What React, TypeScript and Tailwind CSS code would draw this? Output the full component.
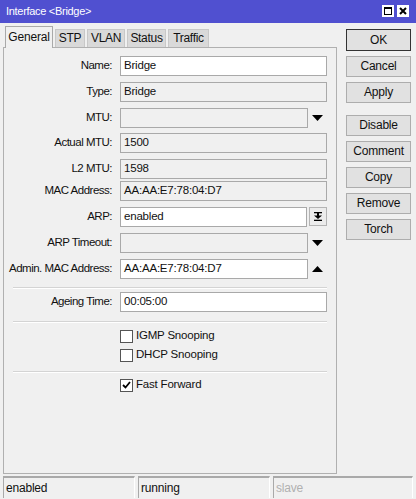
import React from "react";

const DownArrow = () => (
    <svg width="11" height="6" viewBox="0 0 11 6">
        <polygon points="0,0 11,0 5.5,6" fill="#000" />
    </svg>
);

const UpArrow = () => (
    <svg width="11" height="6" viewBox="0 0 11 6">
        <polygon points="0,6 11,6 5.5,0" fill="#000" />
    </svg>
);

const ArpIcon = () => (
    <svg width="8" height="9" viewBox="0 0 8 9">
        <rect x="0" y="0" width="8" height="1.3" fill="#000" />
        <rect x="3" y="1" width="2" height="3" fill="#000" />
        <polygon points="0,3.5 8,3.5 4,7" fill="#000" />
        <rect x="0" y="7.7" width="8" height="1.3" fill="#000" />
    </svg>
);

function Field({
    label,
    value,
    disabled,
    mt,
    side,
}: {
    label: string;
    value?: string;
    disabled?: boolean;
    mt: string;
    side?: "down" | "up" | "arp";
}) {
    const bg = disabled ? "bg-[#f0f0f0]" : "bg-white";
    return (
        <div className={`flex items-center h-[20px] ${mt}`}>
            <div className="w-[108px] text-right text-[#111] text-[11.5px] tracking-[-0.5px]">{label}</div>
            {!side && (
                <div
                    className={`ml-[8px] w-[207px] h-[20px] border border-[#a9a9a9] ${bg} pl-[3px] flex items-center`}
                >
                    {value}
                </div>
            )}
            {(side === "down" || side === "up") && (
                <>
                    <div
                        className={`ml-[8px] w-[188px] h-[20px] border border-[#a9a9a9] ${bg} pl-[3px] flex items-center`}
                    >
                        {value}
                    </div>
                    <div className="w-[19px] flex justify-center">
                        {side === "down" ? <DownArrow /> : <UpArrow />}
                    </div>
                </>
            )}
            {side === "arp" && (
                <>
                    <div className="ml-[8px] w-[187px] h-[20px] border border-[#a9a9a9] bg-white pl-[3px] flex items-center">
                        {value}
                    </div>
                    <div className="ml-[2px] w-[18px] h-[19px] border border-[#b4b4b4] bg-[#ececec] flex items-center justify-center">
                        <ArpIcon />
                    </div>
                </>
            )}
        </div>
    );
}

function Check({ label, checked, mt }: { label: string; checked?: boolean; mt: string }) {
    return (
        <div className={`flex items-center h-[13px] ml-[116px] ${mt}`}>
            <div className="w-[13px] h-[13px] border border-[#555] bg-white flex items-center justify-center">
                {checked && (
                    <svg width="9" height="8" viewBox="0 0 9 8">
                        <polyline
                            points="1,4 3.5,6.5 8,1"
                            fill="none"
                            stroke="#000"
                            strokeWidth="1.8"
                        />
                    </svg>
                )}
            </div>
            <span className="ml-[3px] text-[#111] text-[11.5px]">{label}</span>
        </div>
    );
}

const Sep = ({ mt }: { mt: string }) => (
    <div className={`ml-[9px] w-[314px] h-[2px] border-t border-[#d4d4d4] border-b border-b-white ${mt}`} />
);

const Btn = ({ label, mt, ok }: { label: string; mt: string; ok?: boolean }) => (
    <div
        className={`w-[65px] flex items-center justify-center bg-[#e1e1e1] text-[12px] ${
            ok ? "h-[22px] border border-[#333]" : "h-[21px] border border-[#adadad]"
        } ${mt}`}
    >
        {label}
    </div>
);

export default function App() {
    const tabs = [
        { t: "STP", w: "w-[30px]" },
        { t: "VLAN", w: "w-[38px]" },
        { t: "Status", w: "w-[39px]" },
        { t: "Traffic", w: "w-[41px]" },
    ];
    return (
        <div className="w-[416px] h-[499px] bg-[#f0f0f0] flex flex-col font-['Liberation_Sans',Arial,sans-serif] text-[11.5px] tracking-[-0.2px] text-[#111] overflow-hidden">
            {/* title bar */}
            <div className="h-[23px] bg-[#5050d0] flex items-center pl-[6px] pr-[7px]">
                <span className="text-white text-[11px] tracking-[-0.3px]">Interface &lt;Bridge&gt;</span>
                <div className="ml-auto flex gap-[3px]">
                    <div className="w-[12px] h-[12px] bg-white flex items-center justify-center">
                        <div className="w-[8px] h-[8px] border border-black border-t-2" />
                    </div>
                    <div className="w-[12px] h-[12px] bg-white flex items-center justify-center">
                        <svg width="8" height="8" viewBox="0 0 8 8">
                            <path d="M1 1 L7 7 M7 1 L1 7" stroke="#000" strokeWidth="2" />
                        </svg>
                    </div>
                </div>
            </div>

            <div className="flex flex-1">
                {/* left side */}
                <div className="w-[337px] pl-[3px] flex flex-col">
                    <div className="h-[24px] flex items-end pl-[2px] gap-[2px]">
                        <div className="h-[22px] w-[48px] bg-[#f0f0f0] border border-b-0 border-[#a9a9a9] flex items-center justify-center -mb-px relative z-10 text-[12px]">
                            General
                        </div>
                        {tabs.map((t) => (
                            <div
                                key={t.t}
                                className={`h-[18px] ${t.w} bg-[#d9d9d9] border border-b-0 border-[#c8c8c8] flex items-center justify-center text-[12px] tracking-[-0.3px]`}
                            >
                                {t.t}
                            </div>
                        ))}
                    </div>
                    <div className="h-[427px] border border-[#b0b0b0] flex flex-col pt-[8px]">
                        <Field label="Name:" value="Bridge" mt="mt-0" />
                        <Field label="Type:" value="Bridge" disabled mt="mt-[6px]" />
                        <Field label="MTU:" disabled side="down" mt="mt-[6px]" />
                        <Field label="Actual MTU:" value="1500" disabled mt="mt-[5px]" />
                        <Field label="L2 MTU:" value="1598" disabled mt="mt-[6px]" />
                        <Field label="MAC Address:" value="AA:AA:E7:78:04:D7" disabled mt="mt-[2px]" />
                        <Field label="ARP:" value="enabled" side="arp" mt="mt-[6px]" />
                        <Field label="ARP Timeout:" disabled side="down" mt="mt-[6px]" />
                        <Field label="Admin. MAC Address:" value="AA:AA:E7:78:04:D7" side="up" mt="mt-[6px]" />
                        <Sep mt="mt-[8px]" />
                        <Field label="Ageing Time:" value="00:05:00" mt="mt-[3px]" />
                        <Sep mt="mt-[9px]" />
                        <Check label="IGMP Snooping" mt="mt-[7px]" />
                        <Check label="DHCP Snooping" mt="mt-[6px]" />
                        <Sep mt="mt-[9px]" />
                        <Check label="Fast Forward" checked mt="mt-[6px]" />
                    </div>
                </div>

                {/* right buttons */}
                <div className="ml-[9px] flex flex-col">
                    <Btn label="OK" ok mt="mt-[6px]" />
                    <Btn label="Cancel" mt="mt-[5px]" />
                    <Btn label="Apply" mt="mt-[5px]" />
                    <Btn label="Disable" mt="mt-[12px]" />
                    <Btn label="Comment" mt="mt-[5px]" />
                    <Btn label="Copy" mt="mt-[5px]" />
                    <Btn label="Remove" mt="mt-[5px]" />
                    <Btn label="Torch" mt="mt-[5px]" />
                </div>
            </div>

            {/* status bar */}
            <div className="h-[23px] mt-[2px] mb-[1px] flex gap-[3px] px-[3px] text-[12px]">
                <div className="w-[132px] border-t-2 border-l border-[#a9a9a9] border-r border-r-white pl-[2px] flex items-center">
                    enabled
                </div>
                <div className="w-[132px] border-t-2 border-l border-[#a9a9a9] border-r border-r-white pl-[2px] flex items-center">
                    running
                </div>
                <div className="flex-1 border-t-2 border-l border-[#a9a9a9] border-r border-r-white pl-[2px] flex items-center text-[#b0b0b0]">
                    slave
                </div>
            </div>
        </div>
    );
}
